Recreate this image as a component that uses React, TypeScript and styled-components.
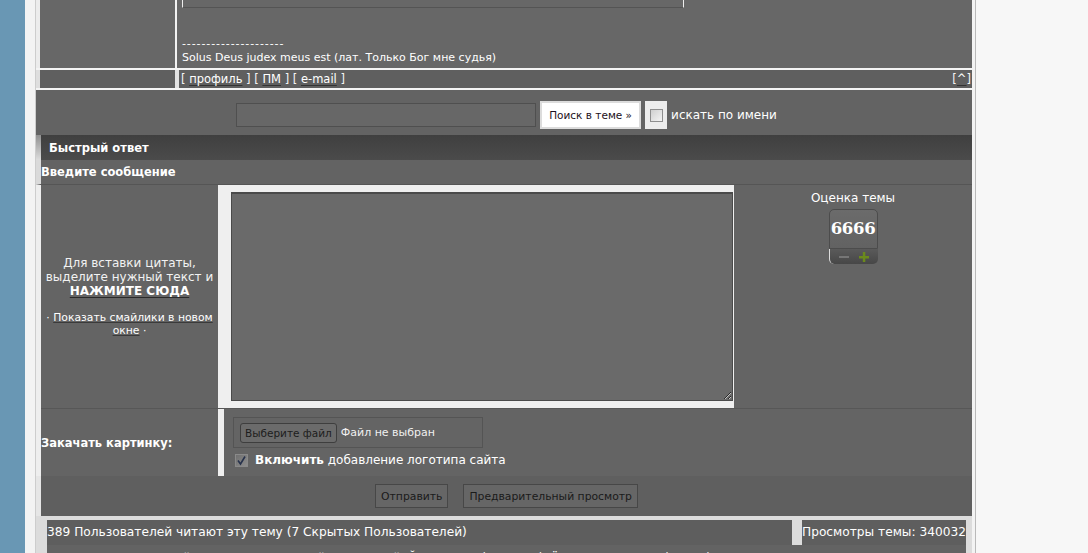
import React from "react";
import styled, {createGlobalStyle} from "styled-components";

const GlobalStyle = createGlobalStyle`
  html, body {
    margin: 0;
    padding: 0;
    overflow: hidden;
    background: #f7f7f7;
  }
  body {
    font-family: "DejaVu Sans", Verdana, sans-serif;
    color: #fff;
  }
`;

const App = () => {
  return (
    <>
      <GlobalStyle/>
      <Viewport>
        <SideStrip/>
        <Shell>
          <Forum>
            <PostRow>
              <PostSide/>
              <PostBody>
                <SigBox/>
                <SigText>
                  <Dashes>---------------------</Dashes>
                  <div>Solus Deus judex meus est (лат. Только Бог мне судья)</div>
                </SigText>
              </PostBody>
            </PostRow>
            <RowDivider/>
            <PostRow small>
              <PostSide small/>
              <PostLinks>
                <span>
                  [ <Link>профиль</Link> ] [ <Link>ПМ</Link> ] [ <Link>e-mail</Link> ]
                </span>
                <span>[<Link>^</Link>]</span>
              </PostLinks>
            </PostRow>
            <RowDivider/>

            <SearchBar>
              <SearchInput/>
              <SearchButton>Поиск в теме »</SearchButton>
              <CheckWrap><PlainCheckbox/></CheckWrap>
              <SearchLabel>искать по имени</SearchLabel>
            </SearchBar>

            <QuickHeader>Быстрый ответ</QuickHeader>
            <SubHeader><span>Введите сообщение</span></SubHeader>

            <FormGrid>
              <FormRow tall>
                <LabelCell center>
                  <QuoteHint>
                    Для вставки цитаты,<br/>
                    выделите нужный текст и<br/>
                    <StrongLink>НАЖМИТЕ СЮДА</StrongLink>
                  </QuoteHint>
                  <SmileHint>
                    · <SmallLink>Показать смайлики в новом окне</SmallLink> ·
                  </SmileHint>
                </LabelCell>
                <Splitter/>
                <EditorCell>
                  <MessageArea defaultValue=""/>
                </EditorCell>
                <RatingCell>
                  <RatingTitle>Оценка темы</RatingTitle>
                  <RatingBox>6666</RatingBox>
                  <RatingControls>
                    <svg width="10" height="10" viewBox="0 0 10 10">
                      <rect x="0" y="4" width="10" height="2" fill="#767676"/>
                    </svg>
                    <svg width="10" height="10" viewBox="0 0 10 10">
                      <rect x="0" y="4" width="10" height="2.5" fill="#6b8a1c"/>
                      <rect x="3.8" y="0" width="2.5" height="10" fill="#6b8a1c"/>
                    </svg>
                  </RatingControls>
                </RatingCell>
              </FormRow>
              <FormRow>
                <LabelCell>
                  <BoldLabel>Закачать картинку:</BoldLabel>
                </LabelCell>
                <Splitter/>
                <UploadCell>
                  <FileBox>
                    <FileButton>Выберите файл</FileButton>
                    <FileName>Файл не выбран</FileName>
                  </FileBox>
                  <LogoOption>
                    <CheckedBox>
                      <svg width="11" height="11" viewBox="0 0 11 11">
                        <path d="M2 5.5 L4.5 9 L9 1.5" stroke="#27324c" strokeWidth="1.6" fill="none"/>
                      </svg>
                    </CheckedBox>
                    <span><b>Включить</b> добавление логотипа сайта</span>
                  </LogoOption>
                </UploadCell>
              </FormRow>
            </FormGrid>

            <ActionBar>
              <ActionButton>Отправить</ActionButton>
              <ActionButton>Предварительный просмотр</ActionButton>
            </ActionBar>

            <StatsArea>
              <StatsRow>
                <StatCell>389 Пользователей читают эту тему (7 Скрытых Пользователей)</StatCell>
                <StatCell>Просмотры темы: 340032</StatCell>
              </StatsRow>
              <ReadersRow>
                Гостей: 382, Пользователей: 7 — Дикий, Йорик, Кот (Бегемот), Ёжик, Лиса, Тень (Ветер), Сова
              </ReadersRow>
            </StatsArea>
          </Forum>
        </Shell>
      </Viewport>
    </>
  );
};

export default App;

const Viewport = styled.div`
  display: flex;
  min-height: 100vh;
`;

const SideStrip = styled.div`
  width: 25px;
  flex: none;
  background: #6997b4;
`;

const Shell = styled.div`
  width: 937px;
  flex: none;
  padding: 0 3px 0 10px;
  background: #f3f3f3;
  border-right: 1px solid #b9b9b9;
`;

const Forum = styled.div`
  border-left: 1px solid #cdcdcd;
  width: 936px;
`;

/* post footer */

const PostRow = styled.div<{small?: boolean}>`
  display: flex;
  height: ${({small}) => small ? "18px" : "68px"};
  background: ${({small}) => small ? "#5f5f5f" : "#676767"};
`;

const PostSide = styled.div<{small?: boolean}>`
  width: 135px;
  flex: none;
  border-left: 4px solid ${({small}) => small ? "#dedede" : "#ececec"};
  border-right: ${({small}) => small ? "4px solid #e2e2e2" : "2px solid #f2f2f2"};
`;

const PostBody = styled.div`
  flex: 1;
  padding-left: 5px;
  font-size: 11px;
`;

const SigBox = styled.div`
  width: 500px;
  height: 7px;
  border-left: 1px solid #eee;
  border-right: 1px solid #eee;
  border-bottom: 1px solid #545454;
`;

const SigText = styled.div`
  margin-top: 29px;
  line-height: 14px;
`;

const Dashes = styled.div`
  letter-spacing: 0.9px;
`;

const PostLinks = styled.div`
  flex: 1;
  display: flex;
  justify-content: space-between;
  align-items: center;
  padding: 0 1px 0 2px;
  font-size: 11.5px;
  color: #f4f4f4;
`;

const Link = styled.a`
  color: #fff;
  text-decoration: underline;
  text-decoration-color: #333;
  text-underline-offset: 2px;
`;

const RowDivider = styled.div`
  height: 2px;
  background: #f4f4f4;
`;

/* search in topic */

const SearchBar = styled.div`
  box-sizing: border-box;
  height: 45px;
  padding: 5px 0 0 5px;
  background: #636363;
  display: flex;
  align-items: center;
  justify-content: center;
  gap: 4px;
`;

const SearchInput = styled.div`
  box-sizing: border-box;
  width: 300px;
  height: 24px;
  background: #676767;
  border: 1px solid #4f4f4f;
`;

const SearchButton = styled.button`
  box-sizing: border-box;
  width: 101px;
  height: 28px;
  background: #fff;
  border: 2px solid #dcdcdc;
  font-family: "DejaVu Sans", sans-serif;
  font-size: 10.5px;
  color: #1c1020;
  padding: 0;
`;

const CheckWrap = styled.div`
  width: 22px;
  height: 28px;
  background: #ececec;
  display: flex;
  align-items: center;
  justify-content: center;
`;

const PlainCheckbox = styled.div`
  box-sizing: border-box;
  width: 13px;
  height: 13px;
  border: 1px solid #8e8e8e;
  background: linear-gradient(135deg, #cfcfcf, #f4f4f4);
`;

const SearchLabel = styled.span`
  font-size: 12px;
`;

/* reply form */

const QuickHeader = styled.div`
  height: 25px;
  display: flex;
  align-items: center;
  padding-left: 8px;
  font-size: 11.5px;
  font-weight: bold;
  background: linear-gradient(#3f3f3f, #4b4b4b);
  border-left: 5px solid #b5b5b5;
  border-image: linear-gradient(#8c8c8c, #e0e0e0) 1;
  border-image-width: 0 0 0 5px;
`;

const SubHeader = styled.div`
  height: 24px;
  display: flex;
  align-items: center;
  background: #636363;
  border-left: 5px solid #dadada;
  border-bottom: 1px solid #555;
  font-size: 11.5px;
  font-weight: bold;
`;

const FormGrid = styled.div`
  border-left: 5px solid #eeeeee;
`;

const FormRow = styled.div<{tall?: boolean}>`
  display: flex;
  height: ${({tall}) => tall ? "223px" : "67px"};
  border-bottom: ${({tall}) => tall ? "1px solid #575757" : "none"};
`;

const LabelCell = styled.div<{center?: boolean}>`
  width: 177px;
  flex: none;
  background: #646464;
  display: flex;
  flex-direction: column;
  justify-content: center;
  align-items: ${({center}) => center ? "center" : "flex-start"};
  text-align: center;
`;

const QuoteHint = styled.div`
  font-size: 12px;
  line-height: 14px;
  color: #f2f2f2;
`;

const StrongLink = styled.a`
  font-weight: bold;
  color: #fff;
  text-decoration: underline;
  text-decoration-color: #2a2a2a;
  text-underline-offset: 2px;
`;

const SmileHint = styled.div`
  margin-top: 13px;
  padding: 0 2px;
  font-size: 10.8px;
  line-height: 13px;
`;

const SmallLink = styled.a`
  color: #fff;
  text-decoration: underline;
  text-decoration-color: #3a3a3a;
  text-underline-offset: 1px;
`;

const BoldLabel = styled.span`
  font-size: 11.5px;
  font-weight: bold;
`;

const Splitter = styled.div`
  width: 6px;
  flex: none;
  background: #efefef;
`;

const EditorCell = styled.div`
  width: 510px;
  flex: none;
  box-sizing: border-box;
  background: #efefef;
  padding: 7px 1px 7px 7px;
`;

const MessageArea = styled.textarea`
  box-sizing: border-box;
  display: block;
  width: 502px;
  height: 209px;
  margin: 0;
  background: #6a6a6a;
  border: 1px solid #4a4a4a;
  border-top: 2px solid #4a4a4a;
  outline: none;
  resize: both;
`;

const RatingCell = styled.div`
  flex: 1;
  background: #646464;
  display: flex;
  flex-direction: column;
  align-items: center;
  padding-top: 6px;
`;

const RatingTitle = styled.div`
  font-size: 12px;
  line-height: 14px;
`;

const RatingBox = styled.div`
  box-sizing: border-box;
  margin-top: 4px;
  width: 49px;
  height: 40px;
  border: 1px solid #4c4c4c;
  border-radius: 5px 5px 0 0;
  background: linear-gradient(#6b6b6b, #626262);
  font-family: "DejaVu Serif", "Liberation Serif", serif;
  font-weight: bold;
  font-size: 16.5px;
  line-height: 38px;
  text-align: center;
  letter-spacing: -0.3px;
`;

const RatingControls = styled.div`
  box-sizing: border-box;
  width: 49px;
  height: 15px;
  border-left: 1px solid #dcdcdc;
  border-radius: 0 0 5px 5px;
  background: linear-gradient(#5a5a5a, #474747);
  display: flex;
  align-items: center;
  justify-content: space-around;
  padding: 0 4px;
`;

const UploadCell = styled.div`
  flex: 1;
  background: #646464;
  padding: 8px 9px;
`;

const FileBox = styled.div`
  box-sizing: border-box;
  width: 250px;
  height: 31px;
  border: 1px solid #545454;
  display: flex;
  align-items: center;
  padding-left: 6px;
`;

const FileButton = styled.div`
  box-sizing: border-box;
  height: 20px;
  padding: 0 4px;
  border: 1px solid #3e3e3e;
  border-radius: 3px;
  background: #6b6b6b;
  color: #1d1d1d;
  font-size: 10.5px;
  line-height: 18px;
`;

const FileName = styled.span`
  margin-left: 4px;
  font-size: 11px;
  color: #f0f0f0;
`;

const LogoOption = styled.div`
  display: flex;
  align-items: center;
  gap: 7px;
  margin-top: 5px;
  margin-left: 2px;
  font-size: 12px;
`;

const CheckedBox = styled.div`
  box-sizing: border-box;
  width: 13px;
  height: 13px;
  border: 1px solid #8a8a8a;
  background: linear-gradient(135deg, #6f6f6f, #8d8d8d);
  display: flex;
  align-items: center;
  justify-content: center;
`;

const ActionBar = styled.div`
  height: 40px;
  background: #5f5f5f;
  border-left: 5px solid #e6e6e6;
  display: flex;
  align-items: center;
  justify-content: center;
  gap: 15px;
`;

const ActionButton = styled.button`
  box-sizing: border-box;
  height: 24px;
  padding: 0 5px;
  background: #666;
  border: 1px solid #474747;
  color: #1a1a1a;
  font-family: "DejaVu Sans", sans-serif;
  font-size: 10.8px;
`;

/* who is reading */

const StatsArea = styled.div`
  background: #dcdcdc;
  padding: 4px 6px 0 11px;
`;

const StatsRow = styled.div`
  display: grid;
  grid-template-columns: 745px 164px;
  gap: 10px;
`;

const StatCell = styled.div`
  height: 25px;
  line-height: 25px;
  background: #5e5e5e;
  font-size: 12.2px;
  white-space: nowrap;
  overflow: hidden;
`;

const ReadersRow = styled.div`
  height: 40px;
  background: #636363;
  padding: 6px 10px 0 100px;
  font-size: 12px;
  white-space: nowrap;
  overflow: hidden;
`;
